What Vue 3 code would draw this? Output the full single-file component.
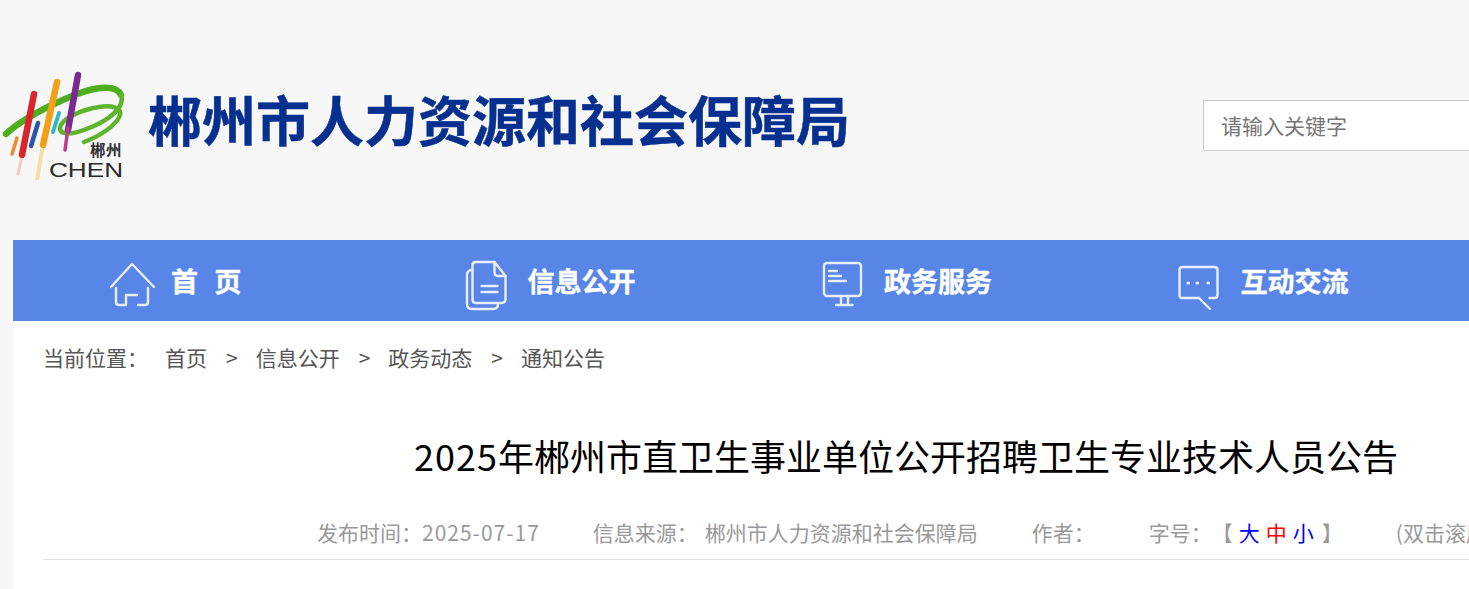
<script setup>
const navItems = [
  { id: 'home', label: '首 页' },
  { id: 'doc', label: '信息公开' },
  { id: 'monitor', label: '政务服务' },
  { id: 'chat', label: '互动交流' },
]
</script>

<template>
  <div class="page">
    <header class="header">
      <svg class="logo" viewBox="0 0 126 180" width="126" height="180">
        <path d="M6 134C12 128 32 112 77 94C96 87 116 84 121 95" fill="none" stroke="#4fae1e" stroke-width="6.5" stroke-linecap="round"/>
        <path d="M121 95C125 106 112 120 84 130C70 135 60 135 60 128C61 119 80 110 99 107C112 105 122 108 120 115C117 125 100 136 84 142" fill="none" stroke="#5cb52a" stroke-width="4.5" stroke-linecap="round"/>
        <path d="M34 94L22 155" stroke="#d9262c" stroke-width="6.5" stroke-linecap="round"/>
        <path d="M21 160L18 174" stroke="#f3c9c4" stroke-width="3" stroke-linecap="round"/>
        <path d="M57 82L43 145" stroke="#f0a116" stroke-width="6.5" stroke-linecap="round"/>
        <path d="M42 150L37 180" stroke="#f8dca6" stroke-width="4" stroke-linecap="round"/>
        <path d="M78 75L68 130" stroke="#7b2a90" stroke-width="6.5" stroke-linecap="round"/>
        <path d="M68 128L65 150" stroke="#bd3a8e" stroke-width="3.5" stroke-linecap="round"/>
        <path d="M38 123L31 146" stroke="#2a55ad" stroke-width="4.5" stroke-linecap="round"/>
        <path d="M59 113L53 132" stroke="#2fb8cb" stroke-width="4" stroke-linecap="round"/>
        <path d="M17 138L12 154" stroke="#ef8a2b" stroke-width="3.5" stroke-linecap="round"/>
        <text x="90" y="156" class="logo-cn">郴州</text>
        <text x="49" y="177" class="logo-en" textLength="74" lengthAdjust="spacingAndGlyphs">CHEN</text>
      </svg>
      <h1 class="site-title">郴州市人力资源和社会保障局</h1>
      <div class="search">请输入关键字</div>
    </header>

    <div class="main">
      <nav class="nav">
        <a v-for="item in navItems" :key="item.id" class="nav-item">
          <svg class="nav-icon" viewBox="0 0 45 60" width="45" height="60" fill="none" stroke="#e8eefc" stroke-width="2.4" stroke-linecap="round" stroke-linejoin="round">
            <template v-if="item.id === 'home'">
              <path d="M1 36L22 13L44 36"/>
              <path d="M6 37V51Q6 54 9 54H16V44H27"/>
              <path d="M38 37V51Q38 54 35 54H28"/>
            </template>
            <g v-else-if="item.id === 'doc'" transform="translate(-1 0)">
              <path d="M6.5 14Q6.5 11 10 11H28.5L39.5 25V48Q39.5 52 35.5 52H10Q6.5 52 6.5 48Z"/>
              <path d="M28.5 11V21Q28.5 25 32 25H39.5"/>
              <path d="M6 19Q1 19 1 24V53Q1 58 6 58H27Q32 58 32 53"/>
              <path d="M15.5 35H31.5M15.5 41H31.5"/>
            </g>
            <template v-else-if="item.id === 'monitor'">
              <rect x="1" y="12" width="37" height="33" rx="3"/>
              <path d="M6 20H14M6 25H18M6 30H23"/>
              <path d="M18 45V52M25 45V52M13 54H29.5"/>
            </template>
            <g v-else transform="translate(-1.5 0)">
              <path d="M20.5 47H4Q1 47 1 44V19Q1 16 4 16H36Q39 16 39 19V44Q39 47 36 47H31"/>
              <path d="M20.5 47L31.5 58"/>
              <path d="M9.5 32H10M18.5 32H19M29.5 32H30" stroke-width="3.2"/>
            </g>
          </svg>
          <span class="nav-label" :class="{ spaced: item.id === 'home' }">{{ item.label }}</span>
        </a>
      </nav>

      <div class="content">
        <div class="crumbs">
          <span class="crumb-lead">当前位置：</span>
          <span>首页</span><span class="sep">&gt;</span>
          <span>信息公开</span><span class="sep">&gt;</span>
          <span>政务动态</span><span class="sep">&gt;</span>
          <span>通知公告</span>
        </div>
        <h2 class="article-title"><span class="title-digits">2025</span>年郴州市直卫生事业单位公开招聘卫生专业技术人员公告</h2>
        <div class="meta">
          <span class="m-date">发布时间：<span class="digits">2025-07-17</span></span>
          <span class="m-source">信息来源：<span class="gap"></span>郴州市人力资源和社会保障局</span>
          <span class="m-author">作者：</span>
          <span class="m-size">字号：</span>
          <span class="bracket">【</span>
          <span class="sz blue">大</span>
          <span class="sz red">中</span>
          <span class="sz blue">小</span>
          <span class="bracket close">】</span>
          <span class="m-dbl">(双击滚屏)</span>
        </div>
      </div>
    </div>
  </div>
</template>

<style>
html, body { margin: 0; background: #f7f7f7; overflow: hidden; }
</style>

<style scoped>
.page {
  width: 1469px;
  height: 589px;
  overflow: hidden;
  background: #f7f7f7;
  font-family: "Noto Sans CJK SC", "Noto Sans", sans-serif;
}
.header {
  height: 240px;
  display: flex;
  align-items: center;
  white-space: nowrap;
}
.logo { flex: none; display: block; align-self: flex-start; }
.logo-cn { font: 700 15.5px "Noto Sans CJK SC", sans-serif; fill: #333; letter-spacing: 0.5px; }
.logo-en { font: 400 20px "Liberation Sans", sans-serif; fill: #2b2b2b; }
.site-title {
  margin: 0 0 3px 22px;
  width: 1055px;
  flex: none;
  font-size: 54px;
  line-height: 54px;
  font-weight: 700;
  color: #062f90;
  -webkit-text-stroke: 0.5px #062f90;
}
.search {
  flex: none;
  box-sizing: border-box;
  width: 320px;
  height: 51px;
  margin-top: 11px;
  background: #fff;
  border: 1px solid #ccc;
  padding-left: 17px;
  font-size: 21px;
  line-height: 48px;
  color: #757575;
}
.main { margin-left: 13px; width: 1456px; background: #fff; height: 349px; }
.nav {
  height: 81px;
  background: #5886e8;
  display: grid;
  grid-template-columns: repeat(4, 356.5px);
  padding-left: 97px;
}
.nav-item { display: flex; align-items: center; gap: 16px; }
.nav-icon { flex: none; margin-top: 1px; overflow: visible; }
.nav-label {
  font-size: 27px;
  font-weight: 700;
  color: #fff;
  line-height: 81px;
  -webkit-text-stroke: 0.4px #fff;
}
.spaced { word-spacing: 10px; }
.content { padding-left: 30px; white-space: nowrap; }
.crumbs {
  height: 77px;
  line-height: 72px;
  font-size: 21px;
  color: #555;
}
.crumb-lead { margin-right: 17px; }
.sep { margin: 0 18px 0 19px; }
.article-title {
  margin: 0;
  padding-left: 371px;
  height: 120px;
  font-size: 36px;
  font-weight: 400;
  line-height: 114px;
  color: #000;
}
.title-digits { letter-spacing: 1px; }
.meta {
  margin-top: -3px;
  height: 45px;
  display: flex;
  font-size: 21px;
  line-height: 34px;
  color: #999;
  padding-left: 274px;
  border-bottom: 1px solid #e2e2e2;
  width: 1426px;
  box-sizing: border-box;
  overflow: hidden;
}
.meta > span { flex: none; }
.digits { letter-spacing: 1px; }
.gap { display: inline-block; width: 7px; }
.m-source { margin-left: 53px; }
.m-author { margin-left: 54px; }
.m-size { margin-left: 54px; }
.m-dbl { margin-left: 53px; }
.bracket { width: 21px; }
.close { margin-left: 8px; }
.sz { margin-left: 6px; width: 21px; }
.blue { color: #0000ff; }
.red { color: #ff0000; }
</style>
